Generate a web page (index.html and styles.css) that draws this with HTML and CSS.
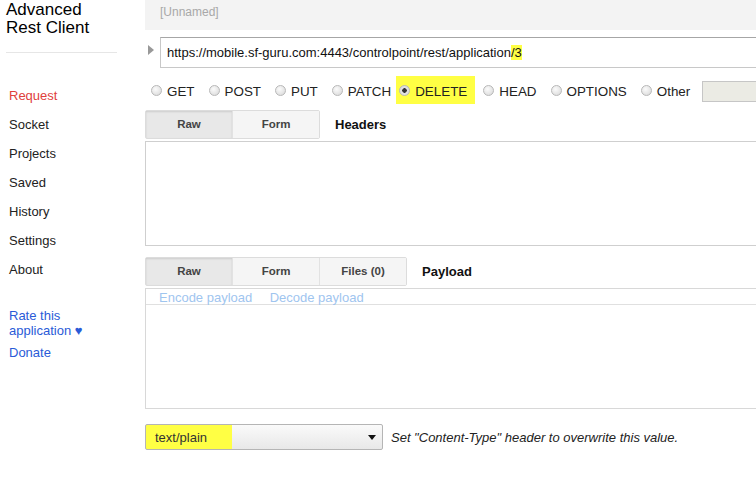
FILE: index.html
```html
<!DOCTYPE html>
<html lang="en">
<head>
  <meta charset="UTF-8">
  <title>Advanced Rest Client</title>
  <link rel="stylesheet" href="styles.css">
</head>
<body>
  <div class="app">
    <div class="sidebar">
      <h1 class="app-title">Advanced Rest Client</h1>
      <ul class="nav">
        <li class="active">Request</li>
        <li>Socket</li>
        <li>Projects</li>
        <li>Saved</li>
        <li>History</li>
        <li>Settings</li>
        <li>About</li>
      </ul>
      <div class="links">
        <a class="link">Rate this application &#9829;</a>
        <a class="link">Donate</a>
      </div>
    </div>

    <div class="main">
      <div class="name-bar">[Unnamed]</div>

      <div class="url-row">
        <span class="toggle"></span>
        <div class="url-input">https://mobile.sf-guru.com:4443/controlpoint/rest/application<mark>/3 </mark></div>
      </div>

      <div class="methods">
        <label class="method"><span class="radio"></span>GET</label>
        <label class="method"><span class="radio"></span>POST</label>
        <label class="method"><span class="radio"></span>PUT</label>
        <label class="method"><span class="radio"></span>PATCH</label>
        <label class="method method-hl"><span class="radio checked"></span>DELETE</label>
        <label class="method"><span class="radio"></span>HEAD</label>
        <label class="method"><span class="radio"></span>OPTIONS</label>
        <label class="method"><span class="radio"></span>Other</label>
        <span class="other-input"></span>
      </div>

      <div class="tab-row">
        <div class="tabs">
          <span class="tab pressed">Raw</span>
          <span class="tab">Form</span>
        </div>
        <span class="section-title">Headers</span>
      </div>
      <div class="headers-box"></div>

      <div class="tab-row payload-tabs">
        <div class="tabs">
          <span class="tab pressed">Raw</span>
          <span class="tab">Form</span>
          <span class="tab">Files (0)</span>
        </div>
        <span class="section-title">Payload</span>
      </div>
      <div class="payload-box">
        <div class="payload-tools">
          <a class="tool">Encode payload</a>
          <a class="tool">Decode payload</a>
        </div>
      </div>

      <div class="content-type">
        <div class="select">
          <span class="select-value">text/plain</span>
          <span class="arrow"></span>
        </div>
        <span class="hint">Set "Content-Type" header to overwrite this value.</span>
      </div>
    </div>
  </div>
</body>
</html>
```

FILE: styles.css
```css
body {
  margin: 0;
  font-family: 'Liberation Sans', Arial, sans-serif;
  color: #222;
  background: #fff;
  overflow: hidden;
}

.app {
  display: flex;
  height: 487px;
}

.sidebar {
  width: 145px;
  flex-shrink: 0;
}

.app-title {
  margin: 0 29px 0 6px;
  padding: 1px 0 15px;
  font-size: 17px;
  font-weight: normal;
  line-height: 18px;
  color: #000;
  border-bottom: 1px solid #e6e6e6;
  width: 111px;
}

.nav {
  list-style: none;
  margin: 28px 0 0;
  padding: 0 0 0 9px;
}

.nav li {
  font-size: 13px;
  line-height: 29px;
  color: #222;
}

.nav li.active {
  color: #e0403c;
}

.links {
  margin-top: 24px;
  padding-left: 9px;
}

.link {
  display: block;
  color: #2a5bd7;
  font-size: 13px;
  line-height: 15px;
  width: 90px;
  margin-bottom: 7px;
}

.main {
  flex: 1;
  min-width: 0;
}

.name-bar {
  background: #f3f3f3;
  height: 30px;
  line-height: 25px;
  padding-left: 15px;
  font-size: 12px;
  color: #a8a8a8;
}

.url-row {
  display: flex;
  align-items: center;
  margin-top: 7px;
  padding-left: 3px;
}

.toggle {
  width: 0;
  height: 0;
  border-top: 5px solid transparent;
  border-bottom: 5px solid transparent;
  border-left: 6px solid #999;
  margin-right: 6px;
  margin-top: -6px;
}

.url-input {
  flex: 1;
  height: 31px;
  border: 1px solid #c8c8c8;
  border-top-color: #a6a6a6;
  border-right: none;
  box-sizing: border-box;
  padding-left: 6px;
  line-height: 30px;
  font-size: 13px;
  color: #111;
  white-space: nowrap;
}

.url-input mark {
  background: #ffff44;
  color: #111;
}

.methods {
  display: flex;
  align-items: center;
  height: 28px;
  margin-top: 7px;
  white-space: nowrap;
}

.method {
  display: flex;
  align-items: center;
  font-size: 13.4px;
  color: #222;
  padding-left: 5px;
  padding-right: 9px;
  height: 28px;
  position: relative;
  top: 2px;
}

.method:first-child {
  padding-left: 6px;
}

.method:nth-child(4) {
  padding-right: 0;
}

.method-hl {
  background: #ffff44;
  margin-left: 5px;
  padding-left: 3px;
  padding-right: 8px;
  margin-right: 3px;
  top: 1px;
  padding-top: 2px;
  height: 28px;
  box-sizing: border-box;
}

.radio {
  width: 11px;
  height: 11px;
  border-radius: 50%;
  border: 1px solid #b8b8b8;
  background: radial-gradient(circle at 40% 35%, #fbfbfb, #d6d6d6);
  margin-right: 5px;
  box-sizing: border-box;
  position: relative;
  top: -1px;
  flex-shrink: 0;
}

.radio.checked {
  background: radial-gradient(circle, #333 0 2px, #e0e0e0 2.5px);
}

.other-input {
  flex: 1;
  height: 19px;
  border: 1px solid #c6c6c6;
  border-right: none;
  background: #ebebe4;
  margin-left: 3px;
  position: relative;
  top: 2px;
}

.tab-row {
  display: flex;
  align-items: center;
  margin-top: 7px;
}

.tabs {
  display: flex;
  border: 1px solid #dcdcdc;
  border-radius: 2px;
}

.tab {
  width: 86px;
  height: 27px;
  line-height: 27px;
  text-align: center;
  font-size: 11.5px;
  font-weight: bold;
  color: #444;
  background: #f5f5f5;
  border-left: 1px solid #e2e2e2;
}

.tab:first-child {
  border-left: none;
}

.tab.pressed {
  background: #e8e8e8;
  box-shadow: inset 0 1px 2px rgba(0, 0, 0, 0.12);
}

.section-title {
  margin-left: 15px;
  font-size: 13px;
  font-weight: bold;
  color: #111;
}

.headers-box {
  height: 103px;
  border: 1px solid #cfcfcf;
  border-right: none;
  margin-top: 2px;
}

.payload-tabs {
  margin-top: 11px;
}

.payload-box {
  height: 119px;
  border: 1px solid #d8d8d8;
  border-right: none;
  margin-top: 2px;
}

.payload-tools {
  height: 15px;
  line-height: 15px;
  border-bottom: 1px solid #e0e0e0;
  padding-left: 13px;
}

.tool {
  font-size: 13px;
  color: #9fc5ef;
  margin-right: 13px;
}

.content-type {
  display: flex;
  align-items: center;
  margin-top: 15px;
}

.select {
  width: 238px;
  height: 26px;
  box-sizing: border-box;
  border: 1px solid #b5b5b5;
  border-radius: 2px;
  background: linear-gradient(to right, #ffff44 0 86px, transparent 86px), linear-gradient(#fafafa, #e8e8e8);
  display: flex;
  align-items: center;
  justify-content: space-between;
  padding: 0 6px 0 9px;
}

.select-value {
  font-size: 13px;
  color: #333;
}

.arrow {
  width: 0;
  height: 0;
  border-left: 4px solid transparent;
  border-right: 4px solid transparent;
  border-top: 5px solid #111;
}

.hint {
  margin-left: 8px;
  font-size: 13px;
  font-style: italic;
  color: #222;
}
```
